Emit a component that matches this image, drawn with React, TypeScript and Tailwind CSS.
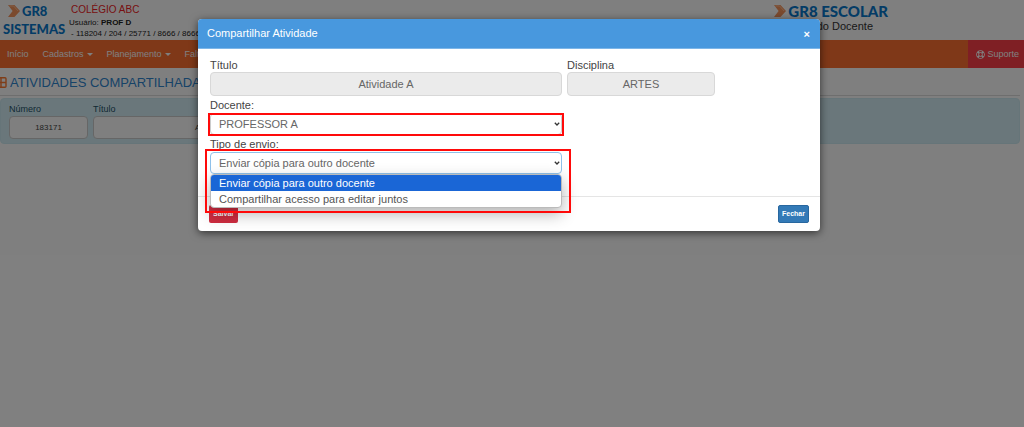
import type { ReactNode } from "react";
import { FaRegLifeRing } from "react-icons/fa";

function BrandArrow({ className }: { className: string }) {
  return (
    <svg viewBox="0 0 13 13" className={className} aria-hidden="true">
      <path d="M0 0h7l6 6.5-6 6.5H0l5-6.500z" fill="#f7945c" />
      <path d="M1.500 1H6l5 5.500" fill="none" stroke="#ffc49c" strokeWidth="1" />
    </svg>
  );
}

function Chevron() {
  return (
    <svg viewBox="0 0 6 4" className="pointer-events-none absolute top-1/2 right-0.5 h-1 w-1.5 -translate-y-1/2" aria-hidden="true">
      <path d="M.8.8 3 3 5.200.8" fill="none" stroke="#333" strokeWidth="1.300" />
    </svg>
  );
}

function NavItem({ children, menu = false }: { children: ReactNode; menu?: boolean }) {
  return (
    <a href="#" className="flex items-center gap-[3px] whitespace-nowrap">
      {children}
      {menu && <span className="border-x-[3px] border-t-[3px] border-x-transparent border-t-white" />}
    </a>
  );
}

const readOnlyField =
  "h-6 w-full rounded-sm border border-[#d8d8d8] bg-[#ebebeb] text-center text-[11px] text-[#666]";
const selectField =
  "block h-[22px] w-full appearance-none rounded-sm border bg-white pl-2 text-[11px] text-[#666] outline-none";

function Page() {
  return (
    <div>
      <header className="flex h-10 items-start justify-between">
        <div className="flex">
          <div className="w-[69px] pt-0.5 pl-[3px] font-['Lato'] text-[13px] leading-[18px] font-black text-[#0878cc]">
            <div className="flex items-center gap-0.5 pl-[5px]">
              <BrandArrow className="size-3" />
              GR8
            </div>
            <div>SISTEMAS</div>
          </div>
          <div className="pt-0.5 text-[8px] leading-[11px] whitespace-nowrap text-[#222]">
            <div className="pl-0.5 text-[10px] leading-[15px] text-[#f01c24]">COLÉGIO ABC</div>
            <div>
              Usuário: <b>PROF D</b>
            </div>
            <div className="pl-0.5">- 118204 / 204 / 25771 / 8666 / 8666</div>
          </div>
        </div>
        <div className="mr-[136px] flex flex-col items-end pt-0.5">
          <div className="flex items-center font-['Lato'] text-[15px] leading-[18px] font-black text-[#0878cc]">
            <BrandArrow className="mr-0.5 size-3" />
            GR8 ESCOLAR
          </div>
          <div className="pr-[15px] text-[11px] leading-3 text-[#333]">do Docente</div>
        </div>
      </header>

      <nav className="flex h-7 justify-between bg-[#ff7030] text-[9px] text-white">
        <div className="flex items-center gap-3.5 pt-px pl-[7px]">
          <NavItem>Início</NavItem>
          <NavItem menu>Cadastros</NavItem>
          <NavItem menu>Planejamento</NavItem>
          <NavItem menu>Faltas</NavItem>
        </div>
        <a href="#" className="flex items-center gap-0.5 bg-[#ff3f48] pt-px pr-[5px] pl-2">
          <FaRegLifeRing className="size-[9px]" />
          Suporte
        </a>
      </nav>

      <main className="pr-1">
        <h1 className="flex h-7 items-center gap-[3px] border-b border-[#ddd] pt-0.5 text-[13px] text-[#2f86d0]">
          <svg viewBox="0 0 7 11" className="h-[11px] w-[7px]" aria-hidden="true">
            <path d="M0 .8h5q1 0 1 1v7.400q0 1-1 1H0M0 5.500h6M1 1v9" fill="none" stroke="#ff7a30" strokeWidth="1.400" />
          </svg>
          ATIVIDADES COMPARTILHADAS
        </h1>
        <section className="mt-0.5 flex gap-[5px] rounded-sm border border-[#cdeaf2] bg-[#d4eef6] pt-1 pb-1 pl-2 text-[9px] text-[#245269]">
          <label className="w-[79px]">
            <span className="block leading-[13px]">Número</span>
            <input readOnly value="183171" className="h-[23px] w-full rounded-sm border border-[#ccc] bg-white text-center text-[8px] text-[#444]" />
          </label>
          <label className="w-[244px]">
            <span className="block leading-[13px]">Título</span>
            <input readOnly value="Atividade A" className="h-[23px] w-full rounded-sm border border-[#ccc] bg-white text-center text-[8px] text-[#444]" />
          </label>
        </section>
      </main>
    </div>
  );
}

function ShareDialog() {
  return (
    <div
      role="dialog"
      aria-modal="true"
      aria-labelledby="share-title"
      className="w-full max-w-[622px] rounded-sm bg-white text-[#444] shadow-[0_2px_8px_rgba(0,0,0,0.6)]"
    >
      <div className="flex h-[30px] items-center justify-between rounded-t-sm border-b border-[#7db6e8] bg-[#4898de] pr-2.5 pl-[9px] text-white">
        <h2 id="share-title" className="text-[11px]">Compartilhar Atividade</h2>
        <button type="button" aria-label="Fechar janela" className="text-[11px] leading-3 font-bold">×</button>
      </div>

      <div className="grid grid-cols-[352fr_148fr_94fr] gap-x-[5px] pt-[9px] pr-1.5 pb-[22px] pl-3 text-[11px]">
        <label>
          <span className="block leading-[14px]">Título</span>
          <input readOnly value="Atividade A" className={readOnlyField} />
        </label>
        <label>
          <span className="block leading-[14px]">Disciplina</span>
          <input readOnly value="ARTES" className={readOnlyField} />
        </label>
        <div className="col-start-1 pt-0.5">
          <label htmlFor="docente" className="block leading-[15px]">Docente:</label>
          <div className="relative">
            <select id="docente" className={`${selectField} border-[#ccc]`}>
              <option>PROFESSOR A</option>
            </select>
            <Chevron />
            <div className="pointer-events-none absolute -inset-x-0.5 top-0 -bottom-px border-2 border-[#ff0a0a]" />
          </div>
        </div>
        <div className="col-start-1 pt-0.5">
          <label htmlFor="tipo" className="block leading-[15px]">Tipo de envio:</label>
          <div className="relative">
            <select id="tipo" className={`${selectField} border-[#8fc1ea]`}>
              <option>Enviar cópia para outro docente</option>
              <option>Compartilhar acesso para editar juntos</option>
            </select>
            <Chevron />
            <ul
              role="listbox"
              aria-label="Tipo de envio"
              className="absolute inset-x-0 top-full z-10 overflow-hidden rounded-sm border border-[#bbb] bg-white leading-4 text-[#555] shadow-[0_6px_16px_rgba(0,0,0,0.3)]"
            >
              <li role="option" aria-selected="true" className="bg-[#1a66d6] pl-2 text-white">
                Enviar cópia para outro docente
              </li>
              <li role="option" aria-selected="false" className="pl-2">
                Compartilhar acesso para editar juntos
              </li>
            </ul>
            <div className="pointer-events-none absolute -top-[3px] -right-[9px] -left-[5px] z-20 h-16 border-2 border-[#ff0a0a]" />
          </div>
        </div>
      </div>

      <div className="flex items-center justify-between border-t border-[#e5e5e5] px-[11px] py-2 text-white">
        <button type="button" className="h-[18px] rounded-xs bg-[#cf2d40] px-1 text-[7px] font-bold">Salvar</button>
        <button type="button" className="h-[18px] rounded-xs border border-[#28679f] bg-[#337ab7] px-[3px] text-[7px] font-bold">Fechar</button>
      </div>
    </div>
  );
}

export default function App() {
  return (
    <div className="relative min-h-screen overflow-hidden bg-white font-['Liberation_Sans',sans-serif]">
      <Page />
      <div className="absolute inset-0 flex items-start justify-center bg-black/50 pt-[19px] pr-1.5">
        <ShareDialog />
      </div>
    </div>
  );
}
